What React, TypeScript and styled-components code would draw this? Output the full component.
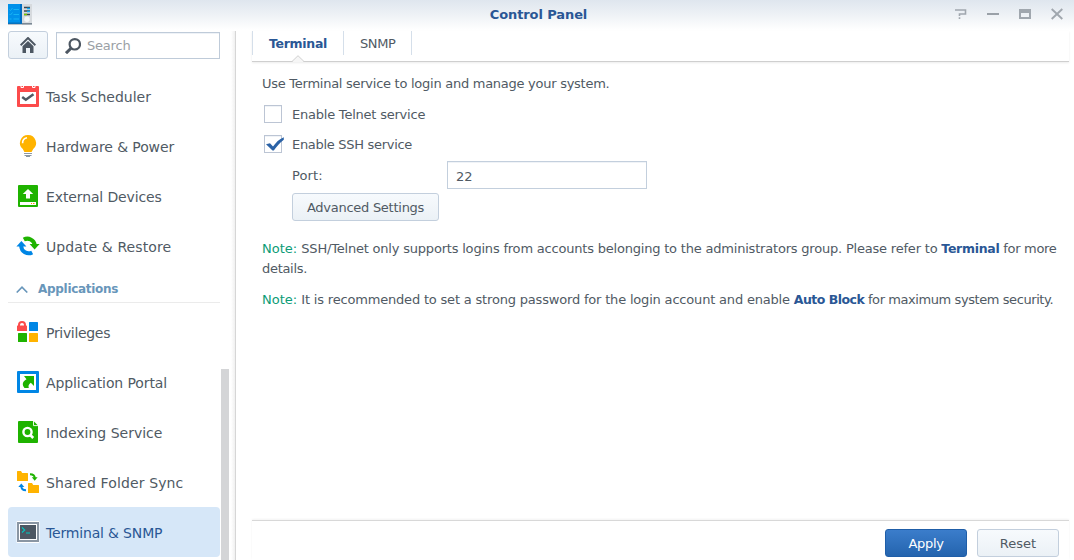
import React from 'react';
import styled, { createGlobalStyle, css } from 'styled-components';

const Global = createGlobalStyle`
  * { box-sizing: border-box; }
  html, body { margin: 0; height: 100%; overflow: hidden; background: #fff; }
  body { font-family: Verdana, 'DejaVu Sans', sans-serif; font-size: 13px; color: #505a64; }
  svg { display: block; flex: none; }
`;

const Window = styled.div`
  display: flex;
  flex-direction: column;
  width: 1074px;
  height: 560px;
  overflow: hidden;
  background: linear-gradient(#dfe6ee 0, #edf1f5 14px, #fff 30px);
`;

const TitleBar = styled.header`
  display: grid;
  grid-template-columns: 1fr auto 1fr;
  align-items: center;
  flex: none;
  height: 31px;
  padding: 0 11px 0 8px;
`;

const AppMark = styled.div`
  margin-top: -2px;
`;

const Title = styled.h1`
  margin: -1px 0 0 6px;
  font-size: 13px;
  line-height: 20px;
  font-weight: 700;
  letter-spacing: -0.1px;
  color: #2a5795;
`;

const WindowControls = styled.div`
  display: flex;
  justify-content: flex-end;
  gap: 20px;
  margin-top: -3px;
`;

const Body = styled.div`
  display: flex;
  flex: 1;
  min-height: 0;
`;

const Sidebar = styled.aside`
  position: relative;
  flex: none;
  width: 236px;
  padding-left: 8px;
  border-right: 1px solid #d6d6d6;
  background: linear-gradient(to left, #f0f0f0 0, #fff 4px);
`;

const SearchRow = styled.div`
  display: flex;
  align-items: flex-start;
  gap: 8px;
  height: 40px;
`;

const buttonFace = css`
  border: 1px solid #c3cfdd;
  border-radius: 3px;
  background: linear-gradient(#f7fafd, #ebf1f6);
`;

const HomeButton = styled.button`
  ${buttonFace}
  display: flex;
  align-items: center;
  justify-content: center;
  width: 40px;
  height: 28px;
  padding: 0;
`;

const SearchBox = styled.label`
  display: flex;
  align-items: center;
  gap: 6px;
  width: 164px;
  height: 27px;
  margin-top: 1px;
  padding-left: 8px;
  border: 1px solid #bfcbd9;
  background: #fff;
  box-shadow: inset 0 1px 0 #eef2f7;
  letter-spacing: -0.2px;
  color: #9a9fa5;
`;

const NavItem = styled.a<{ $active?: boolean; $track?: number }>`
  display: flex;
  align-items: center;
  gap: 6px;
  width: 212px;
  height: 50px;
  padding: 0 0 0 8px;
  border-radius: 4px;
  font-size: 14px;
  letter-spacing: ${p => p.$track ?? 0}px;
  color: ${p => (p.$active ? '#2a5795' : '#505a64')};
  background: ${p => (p.$active ? '#d6e7f8' : 'transparent')};
`;

const NavLabel = styled.span`
  margin-top: 1px;
`;

const SectionHeader = styled.div`
  display: flex;
  align-items: center;
  gap: 10px;
  width: 212px;
  height: 32px;
  margin-bottom: 4px;
  padding: 5px 0 0 8px;
  border-bottom: 1px solid #ebebeb;
  font-size: 12px;
  font-weight: 700;
  letter-spacing: -0.3px;
  color: #6896ba;
`;

const ScrollThumb = styled.div`
  position: absolute;
  right: 6px;
  top: 338px;
  bottom: 0;
  width: 8px;
  background: #d4d5d7;
`;

const Main = styled.main`
  display: flex;
  flex-direction: column;
  flex: 1;
  padding: 0 5px 0 16px;
`;

const TabBar = styled.nav`
  position: relative;
  display: flex;
  flex: none;
  height: 31px;
  border-bottom: 1px solid #cfcfcf;
  box-shadow: 0 1px 2px #ececec;
`;

const Tab = styled.a<{ $active?: boolean }>`
  width: 68px;
  height: 24px;
  padding-left: 16px;
  line-height: 25px;
  border-right: 1px solid #d5dfea;
  font-size: ${p => (p.$active ? 12.5 : 13)}px;
  font-weight: ${p => (p.$active ? 700 : 400)};
  letter-spacing: ${p => (p.$active ? -0.3 : -0.4)}px;
  color: ${p => (p.$active ? '#2a5795' : '#505a64')};
  &:first-child { width: 92px; border-left: 1px solid #d5dfea; }
`;

const TabPointer = styled.svg`
  position: absolute;
  left: 39px;
  bottom: -1px;
`;

const Content = styled.section`
  flex: 1;
  padding: 12px 10px 0;
`;

const Intro = styled.p`
  margin: 0 0 6px;
  line-height: 20px;
  letter-spacing: -0.265px;
`;

const CheckRow = styled.div<{ $track: number }>`
  display: flex;
  align-items: center;
  gap: 10px;
  height: 30px;
  padding-left: 2px;
  margin-top: -1px;
  & + & { margin-top: 0; }
  letter-spacing: ${p => p.$track}px;
`;

const CheckBox = styled.span`
  width: 18px;
  height: 18px;
  border: 1px solid #bcc5d4;
  background: #fff;
  box-shadow: inset 0 1px 0 #f0f3f7;
`;

const Tick = styled.svg`
  overflow: visible;
`;

const PortRow = styled.div`
  display: flex;
  align-items: center;
  height: 28px;
  margin: 2px 0 4px 30px;
`;

const PortLabel = styled.label`
  width: 155px;
  letter-spacing: 0.1px;
`;

const PortInput = styled.input`
  width: 200px;
  height: 28px;
  padding: 2px 8px 0;
  border: 1px solid #c3cfdd;
  background: #fff;
  box-shadow: inset 0 1px 0 #f0f3f7;
  font: inherit;
  color: #505a64;
`;

const Button = styled.button<{ $width: number; $primary?: boolean; $track?: number }>`
  ${buttonFace}
  width: ${p => p.$width}px;
  height: 28px;
  padding: 1px 0 0;
  font: inherit;
  letter-spacing: ${p => p.$track ?? 0}px;
  color: #505a64;
  ${p => p.$primary && css`
    color: #fff;
    border-color: #1f5ea8;
    background: linear-gradient(#3b7dcb, #2464ae);
  `}
`;

const Advanced = styled(Button)`
  margin-left: 30px;
`;

const Note = styled.p<{ $track: number }>`
  margin: 18px -5px 0 0;
  line-height: 20px;
  letter-spacing: ${p => p.$track}px;
  & + & { margin-top: 11px; }
`;

const NoteTag = styled.span`
  letter-spacing: 0;
  color: #0d9c77;
`;

const NoteTail = styled.span<{ $track: number }>`
  letter-spacing: ${p => p.$track}px;
`;

const Link = styled.a<{ $track: number }>`
  font-size: 12.5px;
  line-height: 1;
  font-weight: 700;
  letter-spacing: ${p => p.$track}px;
  color: #2a5795;
`;

const Footer = styled.footer`
  display: flex;
  justify-content: flex-end;
  gap: 10px;
  flex: none;
  height: 40px;
  padding: 8px 10px 0 0;
  border-top: 1px solid #d8d8d8;
  box-shadow: 0 -1px 2px #f3f3f3;
`;

const Icon = ({ children }: { children: React.ReactNode }) => (
  <svg width="24" height="24" viewBox="0 0 24 24" fill="none">{children}</svg>
);

const TaskIcon = () => (
  <Icon>
    <path d="M1 3q0-1 1-1h20q1 0 1 1v19q0 1-1 1H2q-1 0-1-1z" fill="#fc4b4b" />
    <path d="M4 8h16v12H4z" fill="#fff" />
    <path d="M5 1v2.5h2.5V1M16.5 1v2.5H19V1" stroke="#fff" strokeWidth="1" />
    <path d="M6.200 13l3.600 2.800L17.500 10.200" stroke="#505a64" strokeWidth="2.500" />
  </Icon>
);

const BulbIcon = () => (
  <Icon>
    <path d="M12 1a8 8 0 0 1 5.2 14.100L15.600 18H8.400l-1.600-2.900A8 8 0 0 1 12 1z" fill="#ffb300" />
    <path d="M6.600 9.200A5.400 5.400 0 0 1 11 3.800" stroke="#fff" strokeWidth="1.600" />
    <path d="M8 19.500h8M8.500 21.500h7" stroke="#8b98a5" strokeWidth="1" />
    <path d="M10 22.500h4" stroke="#8b98a5" strokeWidth="1" />
  </Icon>
);

const DeviceIcon = () => (
  <Icon>
    <rect x="2" y="1" width="20" height="22" rx="1" fill="#1fb300" />
    <path d="M12 5l5.200 5H14v4.500h-4V10H6.800z" fill="#fff" />
    <path d="M4 18h16v3H4z" fill="#fff" />
    <path d="M15 19.500h1M17 19.500h1.500" stroke="#ff8a00" />
  </Icon>
);

const UpdateIcon = () => (
  <Icon>
    <path d="M7.800 5.600A7.500 7.500 0 0 1 18.800 11" stroke="#1fb300" strokeWidth="4" />
    <path d="M13.600 10h10l-5 5.400z" fill="#1fb300" />
    <path d="M16.200 18.400A7.500 7.500 0 0 1 5.200 12" stroke="#0086e5" strokeWidth="4" />
    <path d="M.400 12.600h10l-5-5.600z" fill="#0086e5" />
  </Icon>
);

const PrivilegesIcon = () => (
  <Icon>
    <rect x="1" y="5.500" width="10" height="5.500" rx=".6" fill="#fc4b4b" />
    <path d="M3 6V5a3 3 0 0 1 6 0v1" stroke="#fc4b4b" strokeWidth="2" />
    <rect x="13" y="2" width="9" height="9" rx=".6" fill="#0086e5" />
    <rect x="2" y="13" width="9" height="9" rx=".6" fill="#1fb300" />
    <rect x="13" y="13" width="9" height="9" rx=".6" fill="#ffb300" />
  </Icon>
);

const PortalIcon = () => (
  <Icon>
    <rect x="1" y="1" width="22" height="22" rx="1" fill="#0086e5" />
    <path d="M4 4h16v16H4z" fill="#fff" />
    <path d="M8 6h10v10l-3.200-3.200c-2.300 1.600-2.600 3.200-2 5.200H8.500c-2.600-2.800-2.400-6.300 2-8.700z" fill="#1fb300" />
  </Icon>
);

const IndexIcon = () => (
  <Icon>
    <path d="M2 2q0-1 1-1h14.500L22 5.500V22q0 1-1 1H3q-1 0-1-1z" fill="#1fb300" />
    <path d="M17.500 1v4.600H22" stroke="#fff" strokeWidth=".9" />
    <circle cx="11.500" cy="12" r="4.100" stroke="#fff" strokeWidth="2.400" />
    <path d="M14.300 15l2.900 3" stroke="#fff" strokeWidth="2.600" />
  </Icon>
);

const SyncIcon = () => (
  <Icon>
    <path d="M1 1.600Q1 1 1.600 1H5l1.200 2H11.400q.6 0 .6.600v6.800q0 .6-.6.600H1.600Q1 11 1 10.400z" fill="#ffb300" />
    <path d="M12 13.600q0-.6.6-.6H16l1.200 2h5.200q.6 0 .6.600v6.800q0 .6-.6.600h-9.800q-.6 0-.6-.6z" fill="#ffb300" />
    <path d="M14 4.200c3 0 4.700.6 4.700 3.800" stroke="#1fb300" strokeWidth="2" />
    <path d="M15.800 7.200h5.800l-2.900 3.600z" fill="#1fb300" />
    <path d="M10 20.200c-3 0-4.700-.8-4.700-4" stroke="#0086e5" strokeWidth="2" />
    <path d="M2.300 17h6l-3-3.600z" fill="#0086e5" />
  </Icon>
);

const TerminalIcon = () => (
  <Icon>
    <rect x=".5" y="1" width="23" height="22" rx="1" fill="#fff" />
    <path d="M1 2h22v20H1z" fill="#8a96a3" />
    <path d="M3 4h18v16H3z" fill="#fff" />
    <path d="M4 5h16v14H4z" fill="#4d5762" />
    <path d="M6 7.500l2.700 2.500L6 12.500M10 13h4" stroke="#00c8c0" strokeWidth="1.100" />
  </Icon>
);

const before = [
  { label: 'Task Scheduler', Glyph: TaskIcon, track: 0.02 },
  { label: 'Hardware & Power', Glyph: BulbIcon, track: -0.1 },
  { label: 'External Devices', Glyph: DeviceIcon, track: -0.12 },
  { label: 'Update & Restore', Glyph: UpdateIcon, track: 0.1 },
];

const applications = [
  { label: 'Privileges', Glyph: PrivilegesIcon, track: -0.32 },
  { label: 'Application Portal', Glyph: PortalIcon, track: -0.1 },
  { label: 'Indexing Service', Glyph: IndexIcon, track: 0 },
  { label: 'Shared Folder Sync', Glyph: SyncIcon, track: 0.12 },
  { label: 'Terminal & SNMP', Glyph: TerminalIcon, track: -0.17, active: true },
];

export default function App() {
  return (
    <>
      <Global />
      <Window>
        <TitleBar>
          <AppMark>
            <svg width="24" height="21" viewBox="0 0 24 21">
              <path d="M14 0h10v21H14z" fill="#d6dade" />
              <path d="M0 0h14v20H0z" fill="#0091ea" />
              <path d="M12 0h2v20h-2z" fill="#006fc4" />
              <path d="M0 19h24v1.500H0z" fill="#7b8894" />
              <path d="M0 18.500h14v1.500H0z" fill="#0671bd" />
              <path d="M1.500 5.500l1 1L4.500 4M5.500 5.500H11M1.500 10l1 1L4.500 8.500M5.500 10.500H11M1.500 15H3.500M5.500 15H11" stroke="#17b4f5" fill="none" />
              <path d="M16 3.500h6M16 7h6M16 10.500h6" stroke="#3b4650" strokeWidth="1.400" />
              <path d="M19 4.500h3M19 7.500h3" stroke="#12a8ef" strokeWidth="1.300" />
              <path d="M16 10.500h3" stroke="#78c800" strokeWidth="1.500" />
              <circle cx="19" cy="15.300" r="2.700" fill="#f4f6f7" />
            </svg>
          </AppMark>
          <Title>Control Panel</Title>
          <WindowControls>
            <svg width="12" height="12" viewBox="0 0 12 12" fill="none" stroke="#a0a7ae">
              <path d="M0 2h10.500v4H4.500v2M4.500 9.300v1.700" strokeWidth="1.600" />
            </svg>
            <svg width="12" height="12" viewBox="0 0 12 12"><path d="M0 5h12v2H0z" fill="#9aa1a8" /></svg>
            <svg width="12" height="12" viewBox="0 0 12 12"><path d="M0 1h12v10H0zM2 5v4h8V5z" fill="#a0a7ae" fillRule="evenodd" /></svg>
            <svg width="12" height="12" viewBox="0 0 12 12"><path d="M.700 1l10.600 10M11.300 1L.700 11" stroke="#a0a7ae" strokeWidth="1.900" /></svg>
          </WindowControls>
        </TitleBar>
        <Body>
          <Sidebar>
            <SearchRow>
              <HomeButton aria-label="Home">
                <svg width="16" height="16" viewBox="0 0 16 16">
                  <path d="M.600 8.200L8 1l7.400 7.200" stroke="#4d5762" strokeWidth="2" fill="none" />
                  <path d="M8 4l5.500 5.300V16h-3.500v-5H6v5H2.500V9.300z" fill="#4d5762" />
                </svg>
              </HomeButton>
              <SearchBox>
                <svg width="16" height="16" viewBox="0 0 16 16" fill="none" stroke="#4d5762">
                  <circle cx="9.800" cy="6.300" r="5.200" strokeWidth="2.200" />
                  <path d="M6 10.200L1 15.200" strokeWidth="3" />
                </svg>
                Search
              </SearchBox>
            </SearchRow>
            {before.map(({ label, Glyph, track }) => (
              <NavItem key={label} $track={track}><Glyph /><NavLabel>{label}</NavLabel></NavItem>
            ))}
            <SectionHeader>
              <svg width="12" height="7" viewBox="0 0 12 7"><path d="M.700 6.500L6 1.200l5.300 5.300" stroke="#6896ba" strokeWidth="1.600" fill="none" /></svg>
              Applications
            </SectionHeader>
            {applications.map(({ label, Glyph, track, active }) => (
              <NavItem key={label} $track={track} $active={active}><Glyph /><NavLabel>{label}</NavLabel></NavItem>
            ))}
            <ScrollThumb />
          </Sidebar>
          <Main>
            <TabBar>
              <Tab $active>Terminal</Tab>
              <Tab>SNMP</Tab>
              <TabPointer width="14" height="7" viewBox="0 0 14 7">
                <path d="M1 7l6-6 6 6z" fill="#f6f6f6" />
                <path d="M0 6.500h1L7 .700l6 5.800h1" stroke="#cfcfcf" fill="none" />
              </TabPointer>
            </TabBar>
            <Content>
              <Intro>Use Terminal service to login and manage your system.</Intro>
              <CheckRow $track={-0.22}><CheckBox />Enable Telnet service</CheckRow>
              <CheckRow $track={-0.3}>
                <CheckBox>
                  <Tick width="18" height="16" viewBox="0 0 18 16">
                    <path d="M1 8.200l4-1 3 3.300C11 6.500 14 3 18.800 1.200v2.500C14.500 7 11.500 11 8.800 14.500H7.500z" fill="#2b62a6" />
                  </Tick>
                </CheckBox>
                Enable SSH service
              </CheckRow>
              <PortRow>
                <PortLabel>Port:</PortLabel>
                <PortInput defaultValue="22" />
              </PortRow>
              <Advanced $width={147} $track={-0.26}>Advanced Settings</Advanced>
              <Note $track={-0.2}>
                <NoteTag>Note: </NoteTag>SSH/Telnet only supports logins from accounts belonging to the administrators group. Please refer to <Link $track={-0.3}>Terminal</Link><NoteTail $track={-0.3}> for more details.</NoteTail>
              </Note>
              <Note $track={-0.185}>
                <NoteTag>Note: </NoteTag>It is recommended to set a strong password for the login account and enable <Link $track={-0.52}>Auto Block</Link><NoteTail $track={-0.42}> for maximum system security.</NoteTail>
              </Note>
            </Content>
            <Footer>
              <Button $width={82} $primary $track={-0.3}>Apply</Button>
              <Button $width={82}>Reset</Button>
            </Footer>
          </Main>
        </Body>
      </Window>
    </>
  );
}
